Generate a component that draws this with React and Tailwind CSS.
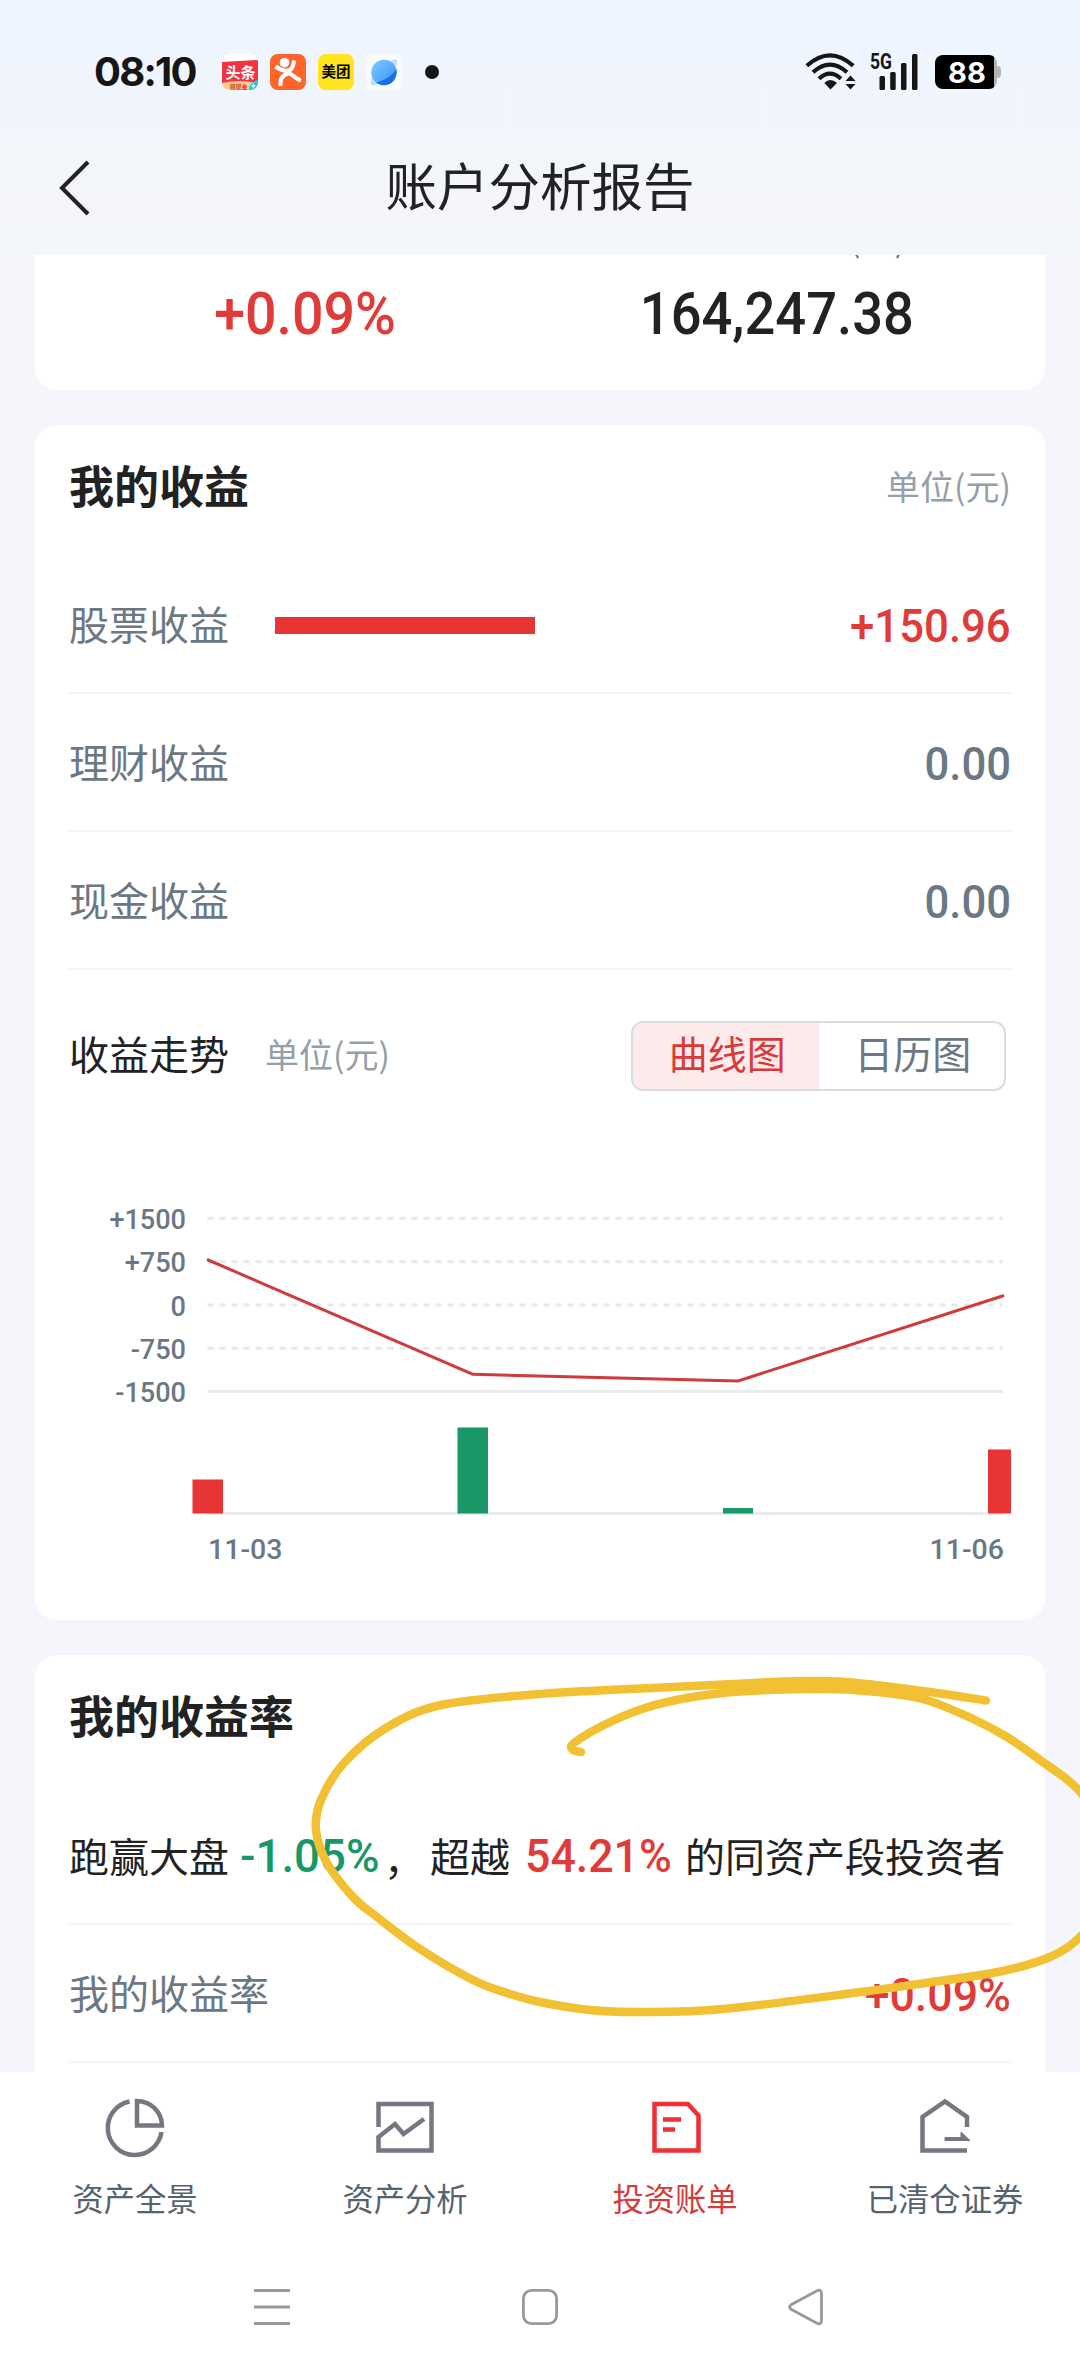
const curvePoints = [
  [581, 1752], [573, 1750], [574, 1743], [606, 1724], [645, 1708], [687, 1698], [740, 1691.5], [820, 1689], [873, 1691.5],
  [923, 1699], [973, 1719], [1007, 1737], [1040, 1760], [1082, 1794], [1110, 1850], [1106, 1905], [1080, 1937],
  [1050, 1957], [998, 1972], [925, 1983], [861, 1992], [723, 2009], [640, 2012], [590, 2010], [540, 2002],
  [507, 1993], [473, 1980], [420, 1949], [377, 1917], [353, 1897], [327, 1863], [316, 1830], [321, 1800], [344, 1763],
  [386, 1728], [441, 1705], [540, 1694], [673, 1687], [773, 1682], [820, 1681], [857, 1683], [930, 1692], [986, 1700.5],
];

// Catmull-Rom through the points, written as cubic segments
function smoothPath(points) {
  let d = `M${points[0][0]} ${points[0][1]}`;
  for (let i = 0; i < points.length - 1; i++) {
    const p0 = points[i - 1] || points[i];
    const p1 = points[i];
    const p2 = points[i + 1];
    const p3 = points[i + 2] || p2;
    d += `C${p1[0] + (p2[0] - p0[0]) / 6} ${p1[1] + (p2[1] - p0[1]) / 6} ${p2[0] - (p3[0] - p1[0]) / 6} ${p2[1] - (p3[1] - p1[1]) / 6} ${p2[0]} ${p2[1]}`;
  }
  return d;
}

const incomes = [
  { label: '股票收益', value: '+150.96', bar: 260, color: 'text-[#e03a39]' },
  { label: '理财收益', value: '0.00', color: 'text-[#6b7883]' },
  { label: '现金收益', value: '0.00', color: 'text-[#6b7883]' },
];

const axisLabels = ['+1500', '+750', '0', '-750', '-1500'];

function StatusBar() {
  return (
    <div className="flex h-[120px] items-center bg-linear-to-b from-[#edf6ff] via-[#f0f5fe] to-[#f2f5fc] pt-6 pr-[83px] pl-[94px]">
      <span className="w-[128px] font-['Inter'] text-[40px] leading-none font-bold tracking-[-1.8px] text-[#161616]">08:10</span>
      <div className="flex items-center gap-3">
        <svg className="size-9" viewBox="0 0 36 36">
          <defs>
            <clipPath id="news">
              <rect width="36" height="36" rx="8" />
            </clipPath>
          </defs>
          <g clipPath="url(#news)">
            <rect width="36" height="36" fill="#fff" />
            <path d="M0 8L36 6V29H0Z" fill="#f5333f" />
            <path d="M0 29Q16 25 36 29V36H0Z" fill="#fbcb92" />
            <path d="M27 36Q27 28 36 26V36Z" fill="#25c4dc" />
            <path d="M32.500 28L29 32.500H31.500L30.500 35.500L34 31H31.500Z" fill="#fff" />
            <text x="3.500" y="23.500" fontFamily="Noto Sans CJK SC" fontSize="15" fontWeight="700" fill="#fff">头条</text>
            <text x="7.500" y="34.800" fontFamily="Noto Sans CJK SC" fontSize="6" fontWeight="700" fill="#d8452f">领现金</text>
          </g>
        </svg>
        <svg className="size-9" viewBox="0 0 36 36" fill="none">
          <rect width="36" height="36" rx="8" fill="#ff652b" />
          <circle cx="14.500" cy="8.700" r="4.800" fill="#fff" />
          <path d="M5.500 12.500C9 15 12 16.500 16 16.800C21 17 23.500 13 24 6.500M10.500 32C10 25 13 20.500 18.500 19.500C23 20 26 25.500 31 26.500M15 16L20 20.500" stroke="#fff" strokeWidth="4" />
        </svg>
        <div className="flex size-9 items-center justify-center rounded-lg bg-[#ffe41e] pb-px text-[14.500px] leading-none font-bold text-black">美团</div>
        <svg className="size-9" viewBox="0 0 36 36">
          <defs>
            <linearGradient id="planet" x1="0" y1="0" x2="1" y2="1">
              <stop offset="0" stopColor="#7accff" />
              <stop offset="1" stopColor="#3a8fff" />
            </linearGradient>
          </defs>
          <rect width="36" height="36" rx="8" fill="#fafbfd" />
          <path d="M5 31C3 26 9 18 17 12S30 4 31 7S28 17 20 24S8 32 5 31Z" fill="#b5e2ff" />
          <circle cx="18" cy="18.500" r="12.700" fill="url(#planet)" />
          <path d="M30.500 15C31 25 26 31 18 31.200C14 31 12 30 10.500 28.500C19 26 26 22 30.500 15Z" fill="#1a6fe6" />
        </svg>
      </div>
      <div className="ml-[23px] size-[14px] rounded-full bg-[#161616]" />
      <div className="ml-auto flex items-center">
        <svg className="h-[38px] w-[114px] overflow-visible" viewBox="0 0 114 38" fill="none" stroke="#161616">
          <path d="M1.800 12.800Q25 -8 48.200 12.800M8 19.300Q25 4 42 19.300M14 25.800Q25 15.500 36 25.800" strokeWidth="4.200" />
          <path d="M19.300 30Q25 24 32 30L25.500 36.500Z" fill="#161616" stroke="none" />
          <path d="M40.500 28L45.500 22.500L50.500 28ZM40.500 31L45.500 36.500L50.500 31Z" fill="#161616" stroke="none" />
          <g fill="#161616" stroke="none">
            <rect x="74.500" y="23" width="5.500" height="14" rx="1.500" />
            <rect x="85.200" y="19" width="5.500" height="18" rx="1.500" />
            <rect x="96" y="10" width="5.500" height="27" rx="1.500" />
            <rect x="107" y="1" width="5.500" height="36" rx="1.500" />
            <text x="65" y="16" fontFamily="Roboto" fontSize="22" fontWeight="700" textLength="22" lengthAdjust="spacingAndGlyphs">5G</text>
          </g>
        </svg>
        <div className="relative ml-4 flex h-[34px] w-[62px] items-center rounded-lg bg-linear-to-r from-black from-95% to-[#b3b3b5] to-95% pl-[13px]">
          <span className="font-['Inter'] text-[29px] leading-none font-bold text-white">88</span>
          <div className="absolute top-[11px] -right-[4px] h-3 w-1 rounded-r bg-[#b3b3b5]" />
        </div>
      </div>
    </div>
  );
}

function Header() {
  return (
    <header className="grid h-[135px] grid-cols-[1fr_auto_1fr] items-center bg-linear-to-b from-[#f2f5fb] to-[#f4f6fa]">
      <svg className="ml-[58px] h-14 w-[34px]" viewBox="0 0 34 56" fill="none" stroke="#222" strokeWidth="4">
        <path d="M30 2L4 28L30 54" />
      </svg>
      <h1 className="pb-2 text-[51.500px] leading-none text-[#222]">账户分析报告</h1>
    </header>
  );
}

function ProfitChart() {
  return (
    <div className="mt-[108px]">
      <div className="flex">
        <div className="-mt-px mr-[5px] flex w-[117px] flex-col text-right font-['Roboto'] text-[28.500px] leading-[43.300px] font-medium text-[#6b7883]">
          {axisLabels.map((label) => (
            <span key={label} className="origin-right scale-x-95">{label}</span>
          ))}
        </div>
        <svg className="h-[330px] w-[820px]" viewBox="191 1200 820 330" fill="none">
          {[1219.300, 1262.700, 1306, 1349.300].map((y) => (
            <path key={y} d={`M207.500 ${y}H1003`} stroke="#e8e8e8" strokeWidth="3" strokeDasharray="6 6" />
          ))}
          <path d="M207.500 1392.500H1003M207.500 1514.500H1003" stroke="#e8ebea" strokeWidth="3" />
          <path d="M207 1260.500L473 1375.300L738 1382L1004 1296.500" stroke="#d03a3a" strokeWidth="3" strokeLinejoin="round" />
          <path d="M192.500 1480.500H223V1514.500H192.500ZM988 1450.500H1011V1514.500H988Z" fill="#e73434" />
          <path d="M457.500 1428.500H488V1514.500H457.500ZM723 1509H753V1514.500H723Z" fill="#199766" />
        </svg>
      </div>
      <div className="flex justify-between pt-[5px] pr-[7px] pl-[139px] font-['Roboto'] text-[28.500px] leading-8 font-medium text-[#6b7883]">
        <span>11-03</span>
        <span>11-06</span>
      </div>
    </div>
  );
}

const tabs = [
  {
    label: '资产全景',
    icon: <path d="M129.500 2101.500A27 27 0 1 0 161.500 2132M137 2101V2125.500H162A25 25 0 0 0 137 2101Z" />,
  },
  {
    label: '资产分析',
    icon: <path transform="translate(-270 0)" d="M378.500 2127V2104H431.500V2150.500H378.500V2137L395 2124L403.500 2134L424 2119" />,
  },
  {
    label: '投资账单',
    active: true,
    icon: <path transform="translate(-540 0)" d="M654.500 2104H688L698.500 2115.500V2150.500H654.500ZM663 2119.500H681M663 2129.500H675" />,
  },
  {
    label: '已清仓证券',
    icon: (
      <g transform="translate(-810 0)">
        <path d="M967 2127V2117L945 2101.500L922.500 2117V2150.500H967" />
        <path d="M945 2137.500H961V2132L970 2140.500H945Z" fill="#747780" strokeWidth="1" />
      </g>
    ),
  },
];

export default function App() {
  return (
    <div className="relative flex h-[2373px] w-[1080px] flex-col overflow-hidden bg-[#f4f6fb] font-['Noto_Sans_CJK_SC',sans-serif]">
      <StatusBar />
      <Header />

      <main className="flex h-[1817px] flex-col overflow-hidden px-[35px]">
        <section className="h-[135px] shrink-0 rounded-b-[22px] bg-white px-[35px]">
          <div className="flex h-1 justify-end overflow-hidden pr-[104px] text-[34px] text-[#6b7883]">
            <span className="-mt-[37px] h-10 leading-10">(元)</span>
          </div>
          <div className="grid grid-cols-2 pt-5 text-center font-['Roboto'] text-[59px] leading-[70px] font-medium">
            <span className="scale-x-94 text-[#e03a39]">+0.09%</span>
            <span className="scale-x-92 pl-1 text-[#222]">164,247.38</span>
          </div>
        </section>

        <section className="mt-[35px] h-[1195px] shrink-0 rounded-[22px] bg-white px-[34px]">
          <div className="flex h-[131px] items-center justify-between pb-3">
            <h2 className="text-[45px] leading-none font-bold text-[#222]">我的收益</h2>
            <span className="pt-[2px] text-[34px] leading-none text-[#969fa8]">单位(元)</span>
          </div>
          {incomes.map((item) => (
            <div key={item.label} className="flex h-[138px] items-center border-b-2 border-[#f3f5f5]">
              <span className="w-[206px] pb-[2px] text-[40px] leading-none text-[#6b7883]">{item.label}</span>
              {item.bar && <div className="mt-[2px] h-[17px] bg-[#e73434]" style={{ width: item.bar }} />}
              <span className={`mt-[2px] ml-auto origin-right scale-x-93 font-['Roboto'] text-[47px] leading-none font-medium ${item.color}`}>{item.value}</span>
            </div>
          ))}
          <div className="flex items-center pt-[51px]">
            <h3 className="pb-[6px] text-[40px] leading-none text-[#222]">收益走势</h3>
            <span className="ml-[36px] pb-[5px] text-[34px] leading-none text-[#969fa8]">单位(元)</span>
            <div className="mr-[5px] ml-auto flex h-[70px] w-[375px] overflow-hidden rounded-xl border-2 border-[#dadcde] text-[39px]">
              <div className="flex flex-1 items-center justify-center bg-[#fdeaea] pb-[7px] pl-[3px] text-[#d93a39]">曲线图</div>
              <div className="flex flex-1 items-center justify-center pb-[7px] pl-[3px] text-[#6b7883]">日历图</div>
            </div>
          </div>
          <ProfitChart />
        </section>

        <section className="mt-[35px] h-[500px] shrink-0 rounded-t-[22px] bg-white px-[34px]">
          <div className="flex h-[131px] items-center pb-3">
            <h2 className="text-[45px] leading-none font-bold text-[#222]">我的收益率</h2>
          </div>
          <div className="flex h-[139px] items-center border-b-2 border-[#f3f5f5] text-[40px] leading-none whitespace-nowrap text-[#222]">
            <span>跑赢大盘</span>
            <span className="ml-[11px] w-[141px] origin-left scale-x-97 pt-px font-['Roboto'] text-[47px] font-medium text-[#199766]">-1.05%</span>
            <span className="ml-[3px] w-[46px] pt-[6px]">，</span>
            <span>超越</span>
            <span className="ml-[15px] w-[160px] origin-left scale-x-95 pt-px font-['Roboto'] text-[47px] font-medium text-[#e03a39]">54.21%</span>
            <span>的同资产段投资者</span>
          </div>
          <div className="flex h-[138px] items-center justify-between border-b-2 border-[#f3f5f5]">
            <span className="pb-[3px] text-[40px] leading-none text-[#6b7883]">我的收益率</span>
            <span className="mt-[3px] origin-right scale-x-95 font-['Roboto'] text-[47px] leading-none font-medium text-[#e03a39]">+0.09%</span>
          </div>
        </section>
      </main>

      <nav className="grid h-[168px] grid-cols-4 bg-white">
        {tabs.map((tab) => (
          <div key={tab.label} className={`flex flex-col items-center pt-[23px] ${tab.active ? 'text-[#d33c3b]' : 'text-[#56636f]'}`}>
            <svg className="size-16" viewBox="103 2095 64 64" fill="none" stroke={tab.active ? '#f02f34' : '#747780'} strokeWidth="4.500">
              {tab.icon}
            </svg>
            <span className="mt-[19px] text-[31.300px] leading-[40px]">{tab.label}</span>
          </div>
        ))}
      </nav>

      <div className="flex h-[133px] items-start justify-between bg-white px-[252px] pt-[47px]">
        <svg className="h-10 w-10" viewBox="0 0 40 40" stroke="#999" strokeWidth="3">
          <path d="M2 3.500H38M2 20H38M2 36.500H38" />
        </svg>
        <svg className="h-10 w-10" viewBox="0 0 40 40" fill="none" stroke="#999" strokeWidth="2.800">
          <rect x="3.400" y="3.400" width="33.200" height="33.200" rx="8" />
        </svg>
        <svg className="h-10 w-10" viewBox="0 0 40 40" fill="none" stroke="#999" strokeWidth="2.800" strokeLinejoin="round">
          <path d="M3.500 17.500L29 3.700Q33.500 2 33.500 7V33Q33.500 38 29 36.300L3.500 22.500Q-.5 20 3.500 17.500Z" />
        </svg>
      </div>

      {/* marker stroke drawn over the page */}
      <svg className="pointer-events-none absolute inset-0 h-[2373px] w-[1080px]" viewBox="0 0 1080 2373" fill="none">
        <path d={smoothPath(curvePoints)} stroke="#f2c033" strokeWidth="8.500" strokeLinecap="round" strokeLinejoin="round" />
      </svg>
    </div>
  );
}
